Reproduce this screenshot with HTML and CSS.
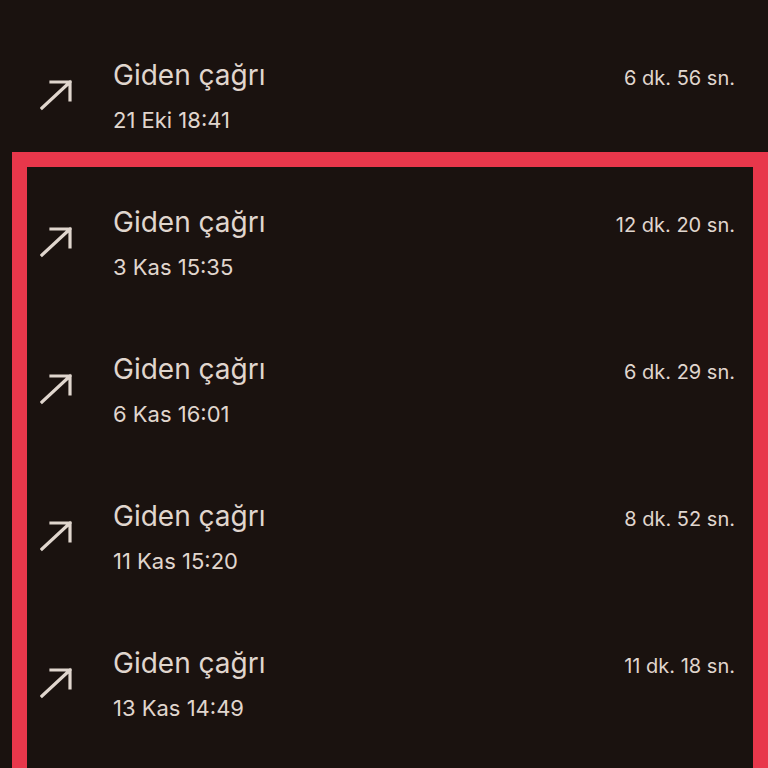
FILE: index.html
```html
<!DOCTYPE html>
<html lang="tr">
<head>
<meta charset="utf-8">
<link rel="stylesheet" href="styles.css">
</head>
<body>
<div class="list">
  <div class="row">
    <svg class="icon" viewBox="0 0 32 32"><path d="M2 29 L30 3 M11 3 H30 V21"/></svg>
    <div class="text">
      <div class="line1"><span class="title">Giden çağrı</span><span class="dur">6 dk. 56 sn.</span></div>
      <div class="sub">21 Eki 18:41</div>
    </div>
  </div>
  <div class="row">
    <svg class="icon" viewBox="0 0 32 32"><path d="M2 29 L30 3 M11 3 H30 V21"/></svg>
    <div class="text">
      <div class="line1"><span class="title">Giden çağrı</span><span class="dur">12 dk. 20 sn.</span></div>
      <div class="sub">3 Kas 15:35</div>
    </div>
  </div>
  <div class="row">
    <svg class="icon" viewBox="0 0 32 32"><path d="M2 29 L30 3 M11 3 H30 V21"/></svg>
    <div class="text">
      <div class="line1"><span class="title">Giden çağrı</span><span class="dur">6 dk. 29 sn.</span></div>
      <div class="sub">6 Kas 16:01</div>
    </div>
  </div>
  <div class="row">
    <svg class="icon" viewBox="0 0 32 32"><path d="M2 29 L30 3 M11 3 H30 V21"/></svg>
    <div class="text">
      <div class="line1"><span class="title">Giden çağrı</span><span class="dur">8 dk. 52 sn.</span></div>
      <div class="sub">11 Kas 15:20</div>
    </div>
  </div>
  <div class="row">
    <svg class="icon" viewBox="0 0 32 32"><path d="M2 29 L30 3 M11 3 H30 V21"/></svg>
    <div class="text">
      <div class="line1"><span class="title">Giden çağrı</span><span class="dur">11 dk. 18 sn.</span></div>
      <div class="sub">13 Kas 14:49</div>
    </div>
  </div>
</div>
<div class="highlight"></div>
</body>
</html>
```
FILE: styles.css
```css
html, body {
  margin: 0;
  padding: 0;
  background: #1a120f;
  height: 768px;
  overflow: hidden;
}
body {
  font-family: Inter, "Noto Sans", sans-serif;
  color: #e0d6ce;
  position: relative;
}
.list {
  display: flex;
  flex-direction: column;
}
.row {
  height: 147px;
  box-sizing: border-box;
  padding: 57px 33px 0 40px;
  display: flex;
  align-items: flex-start;
}
.icon {
  width: 32px;
  height: 32px;
  margin-top: 22px;
  flex: none;
  fill: none;
  stroke: #e0d6ce;
  stroke-width: 3.2;
  stroke-linecap: square;
}
.text {
  margin-left: 41px;
  flex: 1;
  display: flex;
  flex-direction: column;
}
.line1 {
  display: flex;
  justify-content: space-between;
  align-items: baseline;
}
.title {
  font-size: 28px;
  line-height: 36px;
}
.dur {
  font-size: 20px;
}
.sub {
  margin-top: 13px;
  font-size: 22px;
  line-height: 28px;
}
.highlight {
  position: absolute;
  left: 12px;
  top: 152px;
  width: 756px;
  height: 616px;
  border: 15px solid #e8374b;
  border-bottom: 0;
  box-sizing: border-box;
}
```
